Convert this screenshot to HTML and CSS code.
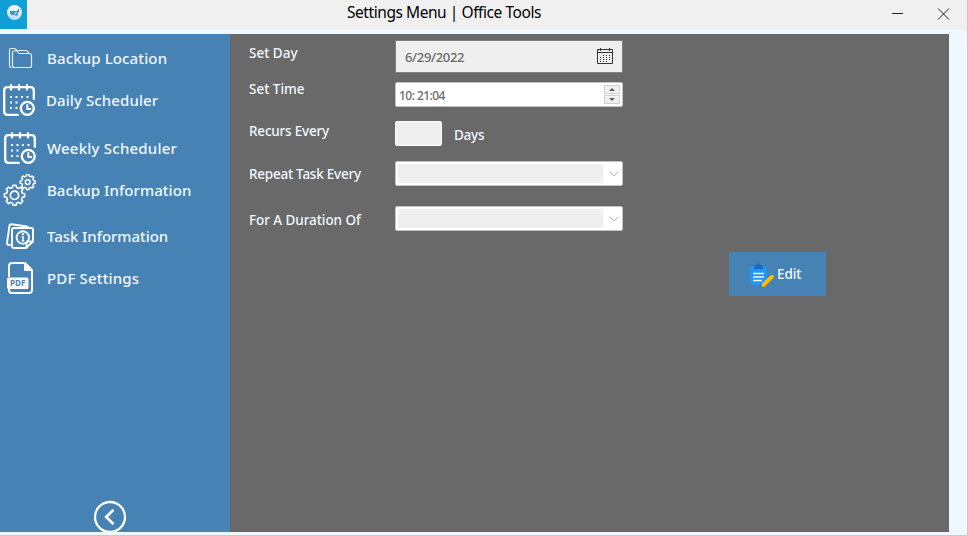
FILE: index.html
```
<!DOCTYPE html>
<html lang="en">
<head>
<meta charset="utf-8">
<title>Settings Menu | Office Tools</title>
<link rel="stylesheet" href="styles.css">
</head>
<body>
<svg class="defs" width="0" height="0">
  <defs>
    <symbol id="schedule" viewBox="0 0 32 32">
      <g fill="none" stroke="#fff" stroke-width="2.300" stroke-linecap="round" stroke-linejoin="round">
        <path d="M15 30.800H4.500Q1.200 30.800 1.200 27.500V6.500Q1.200 3.200 4.500 3.200H27.500Q30.800 3.200 30.800 6.500V15"/>
        <path d="M8 1.200V5.500M16 1.200V5.500M24 1.200V5.500"/>
        <circle cx="24.300" cy="24.300" r="6.500"/>
        <path d="M24.300 21V25H27.300" stroke-width="1.900"/>
      </g>
      <path d="M7 13H9M12.500 13H14.500M18 13H20M23.500 13H25.500M7 18.500H9M12.500 18.500H14.500M7 24H9M12.500 24H14.500" stroke="#fff" stroke-width="2"/>
    </symbol>
    <path id="gear" d="M9.880-1.560V1.560L7.760 1.940L6.860 4.120L8.090 5.880L5.880 8.090L4.120 6.860L1.940 7.760L1.560 9.880H-1.560L-1.940 7.760L-4.120 6.860L-5.880 8.090L-8.090 5.880L-6.860 4.120L-7.760 1.940L-9.880 1.560V-1.560L-7.760-1.940L-6.860-4.120L-8.090-5.880L-5.880-8.090L-4.120-6.860L-1.940-7.760L-1.560-9.880H1.560L1.940-7.760L4.120-6.860L5.880-8.090L8.090-5.880L6.860-4.120L7.760-1.940Z"/>
  </defs>
</svg>
<div class="window">
  <header class="titlebar">
    <div class="app-icon">
      <svg width="27" height="29" viewBox="0 0 27 29">
        <defs><linearGradient id="disc" x2="0" y2="1"><stop offset="0" stop-color="#fff"/><stop offset="1" stop-color="#b9dcfa"/></linearGradient></defs>
        <circle cx="14.500" cy="12.500" r="7.500" fill="url(#disc)"/>
        <path d="M10 11h5v3h-1v1h-3v-1h-1z" fill="#3b93f3"/>
        <path d="M15 11.500h2.500v1.500l-2 2H18M18.500 9v3" fill="none" stroke="#2d83f5" stroke-width="1.200"/>
      </svg>
    </div>
    <h1 class="title"><span>Settings Menu | Office Tools</span></h1>
    <div class="controls">
      <svg width="60" height="16" viewBox="0 0 60 16"><path d="M0 7.500H11" stroke="#222"/><path d="M46 2.500L57 13.500M57 2.500L46 13.500" stroke="#222" stroke-width="1"/></svg>
    </div>
  </header>
  <div class="content">
    <nav class="sidebar">
      <a class="item folder"><span class="icon"><svg width="38" height="32" viewBox="0 0 38 32"><g fill="none" stroke="#e3edf5" stroke-width="1.200" stroke-linejoin="round"><path d="M12 25.500H11Q9.500 25.500 9.500 24V8Q9.500 6.500 11 6.500H14.500L17 8.500H26Q28 8.500 28.500 11.500"/><path d="M12.500 23.500V10.500Q12.500 9 14 9H17L19 11.500H29.500Q31.500 11.500 31.500 13.500V23.500Q31.500 25.500 29.500 25.500H14.500Q12.500 25.500 12.500 23.500Z"/></g></svg></span><span class="name n1">Backup Location</span></a>
      <a class="item daily"><span class="icon"><svg class="cal" width="32" height="32"><use href="#schedule"/></svg></span><span class="name n2">Daily Scheduler</span></a>
      <a class="item weekly"><span class="icon"><svg class="cal" width="32" height="32"><use href="#schedule"/></svg></span><span class="name n3">Weekly Scheduler</span></a>
      <a class="item gears"><span class="icon"><svg width="38" height="32" viewBox="0 0 38 32"><g fill="none" stroke="#fff" stroke-linejoin="round"><g transform="translate(14.500 21.300)"><use href="#gear" transform="scale(1.020)" stroke-width="1.600"/><circle r="4.200" stroke-width="1.700"/></g><g transform="translate(27.700 8.100)"><use href="#gear" transform="scale(.760)" stroke-width="1.900"/><circle r="2.400" stroke-width="1.500"/></g></g></svg></span><span class="name n4">Backup Information</span></a>
      <a class="item task"><span class="icon"><svg width="38" height="32" viewBox="0 0 38 32"><g fill="none" stroke="#fff" stroke-width="1.900" stroke-linejoin="round" stroke-linecap="round"><path d="M10 25L7.500 24.500Q6.800 24 7 23L9.500 5.500Q9.700 4 11.500 4.200L27 6.500Q28.500 6.700 28.500 8"/><path d="M14 8H31.500Q33 8 33 9.500V21.500L26 28H14Q12 28 12 26V10Q12 8 14 8Z"/><path d="M26.500 27.500V22.500Q26.500 21.500 27.500 21.500H32.500"/><circle cx="22.800" cy="17.500" r="6.200"/><path d="M22.300 16.800H23V20.500M22.300 20.700H23.700" stroke-width="1.500"/></g><circle cx="22.900" cy="14.200" r="1.100" fill="#fff"/></svg></span><span class="name n5">Task Information</span></a>
      <a class="item pdf"><span class="icon"><svg width="38" height="32" viewBox="0 0 38 32"><path d="M9 15V4Q9 1 12 1H25L32 8V28Q32 31 29 31H12Q9 31 9 28V26" fill="none" stroke="#fff" stroke-width="2" stroke-linejoin="round"/><path d="M24.500 1V8.500H32Z" fill="#fff" stroke="#fff"/><rect x="7" y="15.500" width="21.500" height="11.500" rx="1.500" fill="#fff"/><text class="pdf-text" x="10" y="24.300" textLength="15.500">PDF</text></svg></span><span class="name n6">PDF Settings</span></a>
      <div class="back"><svg width="34" height="32" viewBox="0 0 34 32"><circle cx="17" cy="17" r="15" fill="none" stroke="#fff" stroke-width="2.300"/><path d="M20.500 9.800L13.200 17L20.500 24.200" fill="none" stroke="#fff" stroke-width="2.700"/></svg></div>
    </nav>
    <main class="panel">
      <div class="row r-day"><label class="l1"><span>Set Day</span></label>
        <div class="date"><span class="date-text">6/29/2022</span>
          <svg width="16" height="16" viewBox="0 0 16 16"><g fill="none" stroke="#333"><path d="M.5 1.500H15.500V15.500H.5ZM0 4.500H16"/><path d="M3.500 0V3M12.500 0V3"/><path d="M6 7.500H14M3 9.500H14M3 11.500H14M3 13.500H11" stroke-dasharray="1 2"/></g></svg>
        </div>
      </div>
      <div class="row r-time"><label class="l2"><span>Set Time</span></label>
        <div class="time"><span class="time-text">10: 21:04</span>
          <div class="spin"><i><svg width="6" height="3"><path d="M0 3L3 0L6 3Z" fill="#606060"/></svg></i><i><svg width="6" height="3"><path d="M0 0L3 3L6 0Z" fill="#606060"/></svg></i></div>
        </div>
      </div>
      <div class="row r-recur"><label class="l3"><span>Recurs Every</span></label><div class="small"></div><span class="days"><span>Days</span></span></div>
      <div class="row r-repeat"><label class="l4"><span>Repeat Task Every</span></label>
        <div class="combo"><div class="value"></div><svg width="10" height="6" viewBox="0 0 10 6"><path d="M1 .8L5 4.800L9 .8" fill="none" stroke="#aaa"/></svg></div></div>
      <div class="row r-duration"><label class="l5"><span>For A Duration Of</span></label>
        <div class="combo"><div class="value"></div><svg width="10" height="6" viewBox="0 0 10 6"><path d="M1 .8L5 4.800L9 .8" fill="none" stroke="#aaa"/></svg></div></div>
      <button class="edit"><svg width="24" height="25" viewBox="0 0 24 25"><rect x="0" y="3" width="17" height="19" rx="3" fill="#2196f3"/><path d="M4 5Q4 2 6.500 2Q8.500-1 10.500 2Q13 2 13 5V6H4Z" fill="#1769c5"/><path d="M3 10.500H14M3 14H14M3 17.500H12" stroke="#eef8ff" stroke-width="1.500"/><path d="M12 24V20.500L20.500 12.500Q22 11 23.300 12.500Q24.700 14 23.200 15.500L15 23.500Z" fill="#ffc107"/><path d="M15 23.500L23.200 15.500Q24 14.500 23.800 13.500L13 24Z" fill="#e99b08"/></svg><span>Edit</span></button>
    </main>
  </div>
</div>
</body>
</html>
```
FILE: styles.css
```
* { box-sizing: border-box; }
body { margin: 0; font-family: "Noto Sans", "Open Sans", sans-serif; }
.defs { display: block; }
.window { width: 968px; height: 536px; overflow: hidden; display: flex; flex-direction: column; background: #f0f8ff; border-right: 1px solid #c8c8c8; border-bottom: 1px solid #c8cacc; }
.titlebar { height: 30px; flex: none; display: flex; background: #f0f0f0; }
.app-icon { width: 27px; height: 29px; background: #129fd5; }
.title { flex: 1; margin: 0 0 0 320px; font-size: 15.500px; font-weight: 400; line-height: 25px; letter-spacing: -.44px; color: #000; white-space: nowrap; }
.controls { width: 75px; padding-top: 6px; }
svg { display: block; flex: none; }
.content { display: flex; height: 498px; margin-top: 4px; }
.sidebar { width: 230px; display: flex; flex-direction: column; background: #4682b4; padding-top: 8px; }
.item { display: flex; align-items: center; height: 32px; flex: none; color: #f0f8ff; font-size: 15px; font-weight: 500; white-space: nowrap; }
.icon { width: 47px; }
.n1 { letter-spacing: .13px; }
.n2 { letter-spacing: .09px; }
.n3 { letter-spacing: .22px; }
.n4 { letter-spacing: .05px; }
.n5 { letter-spacing: -.06px; }
.n6 { letter-spacing: .16px; }
.cal { margin-left: 3px; }
.daily { margin-top: 10px; }
.daily .name { margin-left: -1px; }
.weekly { margin-top: 16px; }
.weekly .cal { margin-left: 4px; }
.gears { margin-top: 10px; }
.task { margin-top: 14px; }
.pdf { margin-top: 10px; }
.pdf-text { font: 700 8px "Noto Sans", sans-serif; fill: #4682b4; }
.back { margin: auto 0 0 93px; }
.panel { width: 719px; background: #696969; padding: 6px 0 0 19px; }
.row { display: flex; align-items: flex-start; }
.row label { width: 146px; height: 20px; line-height: 20px; flex: none; }
.row label, .days { font-size: 13.500px; font-weight: 500; color: #f0f8ff; white-space: nowrap; }
.l1 { margin-top: 3px; }
.date { width: 228px; height: 33px; border: 1px solid #808080; background: #efefef; display: flex; justify-content: space-between; align-items: center; padding: 0 9px; }
.date svg { margin-top: -2px; }
.date-text, .time-text { font-size: 13px; color: #696969; }
.date-text { letter-spacing: -.32px; font-weight: 500; }
.r-time { margin-top: 9px; }
.l2 { margin-top: -3px; }
.time { width: 228px; height: 25px; border: 1px solid #c4c4c4; border-radius: 2px; background: #fff; display: flex; justify-content: space-between; align-items: center; padding: 0 2px 0 3px; }
.time-text { font-size: 12px; font-weight: 500; letter-spacing: -.55px; padding-top: 2px; }
.spin { width: 16px; display: flex; flex-direction: column; gap: 1px; }
.spin i { height: 9px; background: #f0f0f0; border: 1px solid #d0d0d0; display: flex; align-items: center; justify-content: center; }
.r-recur { margin-top: 14px; }
.l3 { letter-spacing: -.2px; }
.small { width: 47px; height: 25px; border: 1px solid #fff; border-radius: 2px; background: #efefef; }
.days { margin: 4px 0 0 12px; line-height: 20px; letter-spacing: -.25px; }
.r-repeat { margin-top: 15px; }
.l4 { margin-top: 3px; letter-spacing: -.24px; }
.combo { width: 228px; height: 25px; border: 1px solid #c4c4c4; border-radius: 2px; background: #fff; display: flex; align-items: center; justify-content: space-between; padding: 0 3px 0 2px; }
.value { width: 205px; height: 19px; background: #efefef; }
.r-duration { margin-top: 20px; }
.l5 { margin-top: 4px; letter-spacing: -.07px; }
.edit { display: flex; align-items: center; gap: 3px; width: 97px; height: 44px; margin: 21px 0 0 480px; padding: 0 0 0 21px; border: 0; background: #4682b4; color: #f0f8ff; font: 500 13.500px "Noto Sans", sans-serif; letter-spacing: -.1px; }
.edit svg { margin-top: 3px; }
```
